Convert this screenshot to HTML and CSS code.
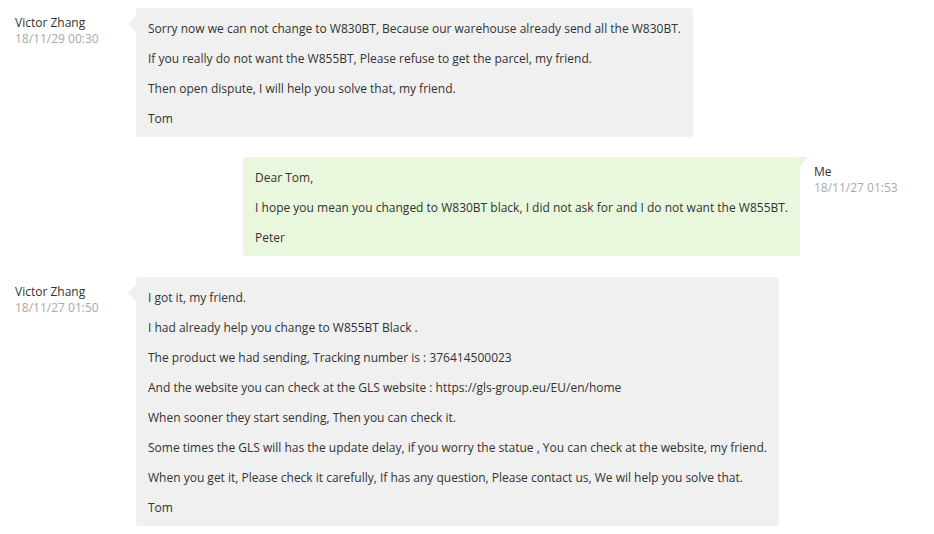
FILE: index.html
```html
<!DOCTYPE html>
<html>
<head>
<meta charset="utf-8">
<link rel="stylesheet" href="styles.css">
</head>
<body>
<div class="chat">
  <div class="row row-in">
    <div class="meta meta-in">
      <div class="name">Victor Zhang</div>
      <div class="date">18/11/29 00:30</div>
    </div>
    <div class="bubble bubble-in">
      <p>Sorry now we can not change to W830BT, Because our warehouse already send all the W830BT.</p>
      <p>If you really do not want the W855BT, Please refuse to get the parcel, my friend.</p>
      <p>Then open dispute, I will help you solve that, my friend.</p>
      <p>Tom</p>
    </div>
  </div>

  <div class="row row-out">
    <div class="bubble bubble-out">
      <p>Dear Tom,</p>
      <p>I hope you mean you changed to W830BT black, I did not ask for and I do not want the W855BT.</p>
      <p>Peter</p>
    </div>
    <div class="meta meta-out">
      <div class="name">Me</div>
      <div class="date">18/11/27 01:53</div>
    </div>
  </div>

  <div class="row row-in">
    <div class="meta meta-in">
      <div class="name">Victor Zhang</div>
      <div class="date">18/11/27 01:50</div>
    </div>
    <div class="bubble bubble-in">
      <p>I got it, my friend.</p>
      <p>I had already help you change to W855BT Black .</p>
      <p>The product we had sending, Tracking number is : 376414500023</p>
      <p>And the website you can check at the GLS website : https://gls-group.eu/EU/en/home</p>
      <p>When sooner they start sending, Then you can check it.</p>
      <p>Some times the GLS will has the update delay, if you worry the statue , You can check at the website, my friend.</p>
      <p>When you get it, Please check it carefully, If has any question, Please contact us, We wil help you solve that.</p>
      <p>Tom</p>
    </div>
  </div>
</div>
</body>
</html>
```

FILE: styles.css
```css
html, body {
  margin: 0;
  padding: 0;
  background: #ffffff;
}

body {
  font-family: "Open Sans", "Noto Sans", "Liberation Sans", sans-serif;
  font-size: 12px;
  color: #333333;
}

.chat {
  display: flex;
  flex-direction: column;
  gap: 20px;
  padding-top: 8px;
}

.row {
  display: flex;
  align-items: flex-start;
}

.row-out {
  justify-content: flex-end;
  margin-bottom: 1px;
}

.meta {
  padding-top: 7px;
  line-height: 16px;
  box-sizing: border-box;
}

.meta-in {
  width: 136px;
  padding-left: 15px;
  flex-shrink: 0;
}

.meta-out {
  width: 120px;
  margin-left: 14px;
  flex-shrink: 0;
}

.name {
  color: #333333;
}

.date {
  color: #aaaaaa;
}

.bubble {
  position: relative;
  padding: 11px 12px 8px;
  border-radius: 3px;
}

.bubble p {
  margin: 0 0 10px;
  line-height: 20px;
  white-space: nowrap;
}

.bubble p:last-child {
  margin-bottom: 0;
}

.bubble-in {
  background: #f0f0f0;
}

.bubble-in::before {
  content: "";
  position: absolute;
  left: -8px;
  top: 8px;
  border-style: solid;
  border-width: 8px 8px 8px 0;
  border-color: transparent #f0f0f0 transparent transparent;
}

.bubble-out {
  background: #e9f7dc;
}

.bubble-out::after {
  content: "";
  position: absolute;
  right: -8px;
  top: 0;
  border-style: solid;
  border-width: 0 0 10px 8px;
  border-color: transparent transparent transparent #e9f7dc;
}
```
